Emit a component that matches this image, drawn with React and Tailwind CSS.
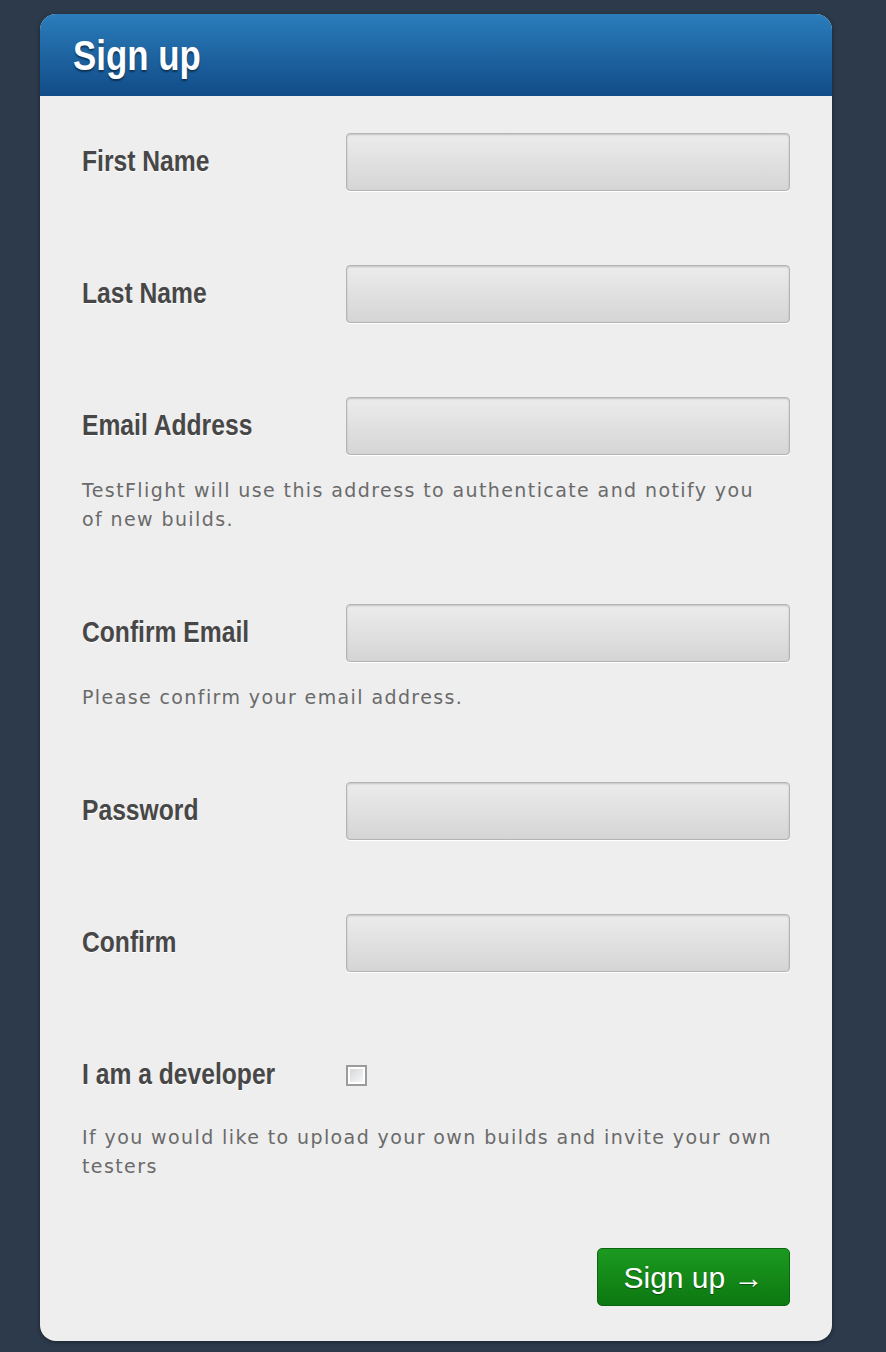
const sans = { fontFamily: '"Liberation Sans", Arial, sans-serif' };

function Label({ children }) {
  return (
    <div className="w-[264px] shrink-0">
      <label
        className="inline-block origin-left scale-x-[0.85] whitespace-nowrap text-[29px] font-bold text-[#474747] [text-shadow:0_1px_0_#ffffff]"
        style={sans}
      >
        {children}
      </label>
    </div>
  );
}

function Field({ label, type = "text" }) {
  return (
    <div className="flex h-[58px] items-center">
      <Label>{label}</Label>
      <input
        type={type}
        className="h-[58px] w-[444px] rounded-[4px] border border-[#b4b4b4] bg-gradient-to-b from-[#ececec] to-[#d5d5d5] shadow-[inset_0_1px_2px_rgba(0,0,0,0.18),0_1px_0_#ffffff] outline-none"
      />
    </div>
  );
}

function Help({ children, className = "" }) {
  return (
    <p
      className={`w-[694px] text-[19px] leading-[29px] tracking-[1.4px] text-[#6a6a6a] ${className}`}
      style={{ fontFamily: '"DejaVu Sans", Verdana, sans-serif' }}
    >
      {children}
    </p>
  );
}

export default function App() {
  return (
    <div className="min-h-[1352px] bg-[#2c3a4b] pt-[14px] pl-[40px]">
      <div className="w-[792px] overflow-hidden rounded-[16px] bg-[#eeeeee] shadow-[0_1px_4px_rgba(0,0,0,0.4)]">
        {/* header */}
        <div className="flex h-[82px] items-center bg-gradient-to-b from-[#2b7dbb] to-[#114c88] pl-[33px]">
          <h1
            className="origin-left scale-x-[0.81] whitespace-nowrap text-[43px] font-bold text-white [text-shadow:0_2px_2px_rgba(0,0,0,0.45)]"
            style={sans}
          >
            Sign up
          </h1>
        </div>

        <form className="px-[42px] pt-[37px] pb-[35px]" onSubmit={(e) => e.preventDefault()}>
          <Field label="First Name" />
          <div className="mt-[74px]">
            <Field label="Last Name" />
          </div>
          <div className="mt-[74px]">
            <Field label="Email Address" type="email" />
          </div>
          <Help className="mt-[21px]">
            TestFlight will use this address to authenticate and notify you of new builds.
          </Help>

          <div className="mt-[70px]">
            <Field label="Confirm Email" type="email" />
          </div>
          <Help className="mt-[21px]">Please confirm your email address.</Help>

          <div className="mt-[70px]">
            <Field label="Password" type="password" />
          </div>
          <div className="mt-[74px]">
            <Field label="Confirm" type="password" />
          </div>

          {/* developer checkbox */}
          <div className="mt-[74px] flex h-[58px] items-center">
            <Label>I am a developer</Label>
            <span className="flex h-[21px] w-[21px] items-center justify-center border-2 border-[#9c9c9c] bg-white">
              <span className="h-[13px] w-[13px] bg-gradient-to-br from-[#d4d7da] to-[#f7f7f7]" />
            </span>
          </div>
          <Help className="mt-[19px]">
            If you would like to upload your own builds and invite your own testers
          </Help>

          <div className="mt-[67px] flex justify-end">
            <button
              type="submit"
              className="flex h-[58px] w-[193px] items-center justify-center rounded-[5px] border border-[#0b6410] bg-gradient-to-b from-[#1c9a20] to-[#0c7811] text-[30px] text-white [text-shadow:0_1px_1px_rgba(0,0,0,0.4)]"
              style={sans}
            >
              Sign up →
            </button>
          </div>
        </form>
      </div>
    </div>
  );
}
